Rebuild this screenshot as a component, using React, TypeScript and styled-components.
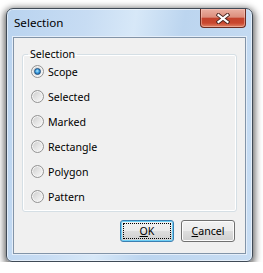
import React from "react";
import styled, { createGlobalStyle } from "styled-components";

const GlobalStyle = createGlobalStyle`
  html, body {
    margin: 0;
    padding: 0;
    background: #ffffff;
  }
  body {
    font-family: "Segoe UI", "Noto Sans", "Open Sans", sans-serif;
    font-size: 10.6px;
    color: #000000;
  }
`;

const Page = styled.div`
  padding: 8px 0 0 6px;
`;

const Window = styled.div`
  box-sizing: border-box;
  width: 247px;
  height: 254px;
  display: flex;
  flex-direction: column;
  padding: 0 6px 7px 6px;
  border: 1px solid #3f4a56;
  border-radius: 7px 7px 6px 6px;
  background: linear-gradient(
    100deg,
    #b9d3ef 0%,
    #c7dcf3 28%,
    #d7e8f8 45%,
    #bcd5ef 62%,
    #c8ddf3 100%
  );
  box-shadow: inset 0 0 0 1px rgba(255, 255, 255, 0.55),
    0 2px 7px 2px rgba(0, 0, 0, 0.6);
`;

const TitleBar = styled.div`
  height: 28px;
  display: flex;
  justify-content: space-between;
  align-items: flex-start;
`;

const Title = styled.div`
  margin: 6px 0 0 1px;
  font-size: 11.6px;
  line-height: 16px;
  color: #000000;
`;

const CloseButton = styled.div`
  box-sizing: border-box;
  width: 46px;
  height: 19px;
  display: flex;
  align-items: center;
  justify-content: center;
  border: 1px solid #6b2c22;
  border-top: none;
  border-radius: 0 0 4px 4px;
  background: linear-gradient(
    #eab0a2 0%,
    #dc8e7d 45%,
    #c3432d 52%,
    #c9472f 78%,
    #e08468 100%
  );
  box-shadow: inset 0 0 0 1px rgba(255, 210, 200, 0.45);
`;

const Client = styled.div`
  flex: 1;
  display: flex;
  flex-direction: column;
  padding: 9px 8px 0 8px;
  background: #f0f0f0;
  border: 1px solid #8294a8;
  box-shadow: 0 0 0 1px #e4eefa;
`;

const Group = styled.fieldset`
  margin: 0;
  padding: 1px 8px 6px 8px;
  border: 1px solid #d5dfe5;
  border-radius: 3px;
  box-shadow: inset 0 0 0 1px #ffffff;
  display: flex;
  flex-direction: column;
  gap: 8px;
`;

const Legend = styled.legend`
  margin-left: -3px;
  padding: 0 2px;
  line-height: 15px;
`;

const Option = styled.div`
  height: 17px;
  display: flex;
  align-items: center;
  gap: 4px;
`;

const RadioCircle = styled.span`
  box-sizing: border-box;
  width: 13px;
  height: 13px;
  border-radius: 50%;
  border: 1px solid #939393;
  display: flex;
  align-items: center;
  justify-content: center;
  background: linear-gradient(135deg, #c9c9c9 0%, #e2e2e2 45%, #fbfbfb 100%);
  box-shadow: inset 0 0 0 1px #f6f6f6;
`;

const RadioDot = styled.span`
  box-sizing: border-box;
  width: 7px;
  height: 7px;
  border-radius: 50%;
  border: 1px solid #1b4e80;
  background: radial-gradient(
    circle at 45% 40%,
    #b4ecff 0%,
    #3c9de0 45%,
    #11528f 100%
  );
`;

const Label = styled.span`
  line-height: 16px;
`;

const ButtonRow = styled.div`
  display: flex;
  justify-content: flex-end;
  gap: 7px;
  margin: 8px 2px 0 0;
`;

const Button = styled.div<{ $default?: boolean }>`
  box-sizing: border-box;
  width: 54px;
  height: 22px;
  display: flex;
  align-items: center;
  justify-content: center;
  border-radius: 3px;
  border: 1px solid ${(p) => (p.$default ? "#3c7fb1" : "#707070")};
  background: linear-gradient(
    #f2f2f2 0%,
    #ebebeb 48%,
    #dddddd 52%,
    #cfcfcf 100%
  );
  box-shadow: inset 0 0 0 1px
    ${(p) => (p.$default ? "#6fd0f6" : "#fcfcfc")};
  outline: ${(p) => (p.$default ? "1px dotted #000" : "none")};
  outline-offset: -4px;
  line-height: 16px;
`;

const options = ["Scope", "Selected", "Marked", "Rectangle", "Polygon", "Pattern"];

const CloseGlyph = () => (
  <svg width="14" height="11" viewBox="0 0 14 11">
    <path
      d="M2.5 2 L11.5 9 M11.5 2 L2.5 9"
      stroke="#4a2520"
      strokeWidth="4"
      strokeLinecap="square"
    />
    <path
      d="M2.5 2 L11.5 9 M11.5 2 L2.5 9"
      stroke="#ffffff"
      strokeWidth="2.2"
      strokeLinecap="square"
    />
  </svg>
);

export default function App() {
  return (
    <Page>
      <GlobalStyle />
      <Window>
        <TitleBar>
          <Title>Selection</Title>
          <CloseButton>
            <CloseGlyph />
          </CloseButton>
        </TitleBar>
        <Client>
          <Group>
            <Legend>Selection</Legend>
            {options.map((name, i) => (
              <Option key={name}>
                <RadioCircle>{i === 0 && <RadioDot />}</RadioCircle>
                <Label>{name}</Label>
              </Option>
            ))}
          </Group>
          <ButtonRow>
            <Button $default>
              <u>O</u>K
            </Button>
            <Button>
              <u>C</u>ancel
            </Button>
          </ButtonRow>
        </Client>
      </Window>
    </Page>
  );
}
